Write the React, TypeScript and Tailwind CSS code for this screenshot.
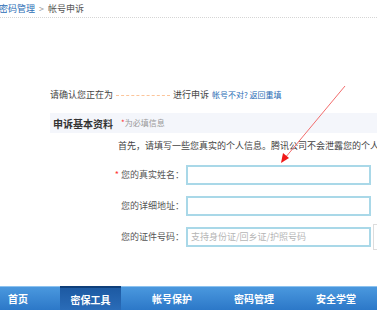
import React from 'react';

const font = { fontFamily: '"Noto Sans CJK SC", "Noto Sans", sans-serif' };

const navItems = ['帐号保护', '密码管理', '安全学堂'];

interface FieldRowProps {
  label: string;
  required?: boolean;
  placeholder?: string;
  extra?: boolean;
}

const FieldRow: React.FC<FieldRowProps> = ({ label, required, placeholder, extra }) => (
  <div className="flex items-center h-[20px]">
    <div className="w-[186px] shrink-0 text-right text-[9px] text-[#555] pr-[2px] whitespace-nowrap">
      {required && <span className="text-[#f33] mr-[2px]">*</span>}
      {label}：
    </div>
    <div className="w-[185px] shrink-0 h-[20px] border-2 border-[#a9d8e8] bg-white flex items-center pl-[3px] text-[9px] text-[#b5b5b5]">
      {placeholder}
    </div>
    {extra && (
      <div className="ml-[2px] w-[10px] h-[26px] border border-r-0 border-[#ddd] shrink-0" />
    )}
  </div>
);

export default function App() {
  return (
    <div className="relative w-[377px] h-[310px] bg-white overflow-hidden flex flex-col" style={font}>
      {/* 面包屑 */}
      <div className="h-[18px] flex items-center text-[9px] border-b border-dotted border-[#d5d5d5] -ml-[1px]">
        <span className="text-[#2a6db5]">密码管理</span>
        <span className="text-[#999] mx-[4px]">&gt;</span>
        <span className="text-[#555]">帐号申诉</span>
      </div>

      {/* 确认帐号 */}
      <div className="mt-[71px] pl-[50px] h-[12px] flex items-center text-[9px] text-[#444] whitespace-nowrap">
        <span>请确认您正在为</span>
        <span className="inline-block w-[54px] mx-[3px] border-t border-dashed border-[#fcc59a]" />
        <span>进行申诉</span>
        <span className="ml-[3px] text-[8px] text-[#2a6db5]">帐号不对? 返回重填</span>
      </div>

      {/* 申诉基本资料 */}
      <div className="mt-[12px] ml-[50px] h-[20px] bg-[#f4f6fb] flex items-center pl-[3px] whitespace-nowrap">
        <span className="text-[10px] font-bold text-[#333]">申诉基本资料</span>
        <span className="ml-[8px] text-[8px] text-[#999]">
          <span className="text-[#f33]">*</span>为必填信息
        </span>
      </div>

      <div className="mt-[6px] pl-[118px] h-[14px] flex items-center text-[9px] text-[#444] whitespace-nowrap">
        首先，请填写一些您真实的个人信息。腾讯公司不会泄露您的个人信息
      </div>

      <div className="mt-[12px] flex flex-col gap-[11px]">
        <FieldRow label="您的真实姓名" required />
        <FieldRow label="您的详细地址" />
        <FieldRow label="您的证件号码" placeholder="支持身份证/回乡证/护照号码" extra />
      </div>

      {/* 底部导航 */}
      <div className="mt-auto h-[24px] flex border-t border-[#8cc2ef] bg-gradient-to-b from-[#4a98de] to-[#2c78c8] text-white text-[10px] font-bold whitespace-nowrap">
        <div className="w-[60px] pl-[8px] flex items-center">首页</div>
        <div className="w-[61px] flex items-center justify-center border-t-2 border-[#0f3f7a] -mt-[1px] bg-gradient-to-b from-[#1d5aa3] to-[#2a6cb8]">
          密保工具
        </div>
        <div className="ml-[10px] flex">
          {navItems.map((item) => (
            <div key={item} className="w-[82px] flex items-center justify-center">
              {item}
            </div>
          ))}
        </div>
      </div>

      {/* 红色箭头标注 */}
      <svg className="absolute left-0 top-0 pointer-events-none" width="377" height="310">
        <line x1="345" y1="86" x2="285" y2="158" stroke="#f26d6d" strokeWidth="1" />
        <polygon points="281,163 283,153 289,158" fill="#f01818" />
      </svg>
    </div>
  );
}
